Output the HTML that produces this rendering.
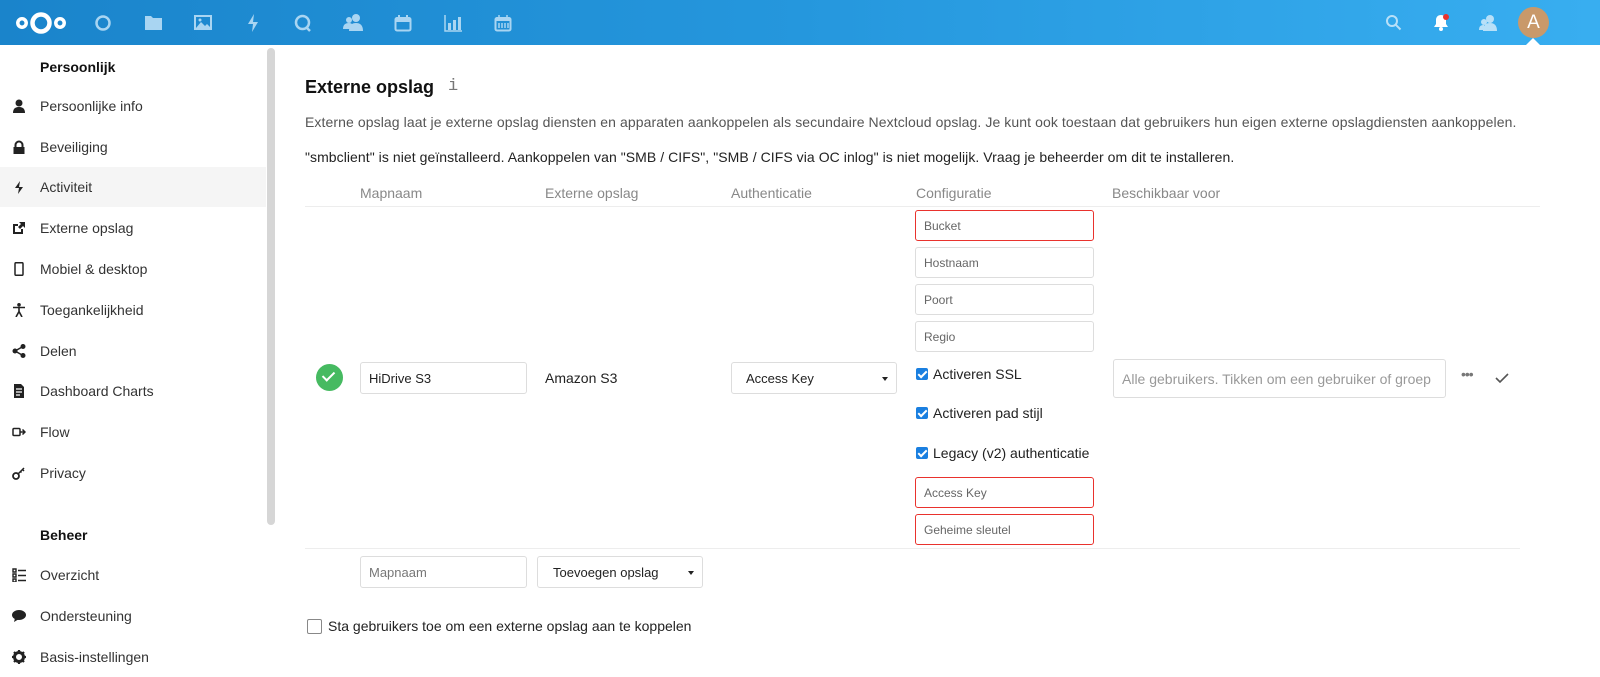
<!DOCTYPE html>
<html><head><meta charset="utf-8"><style>
*{box-sizing:border-box;margin:0;padding:0}
body{width:1600px;height:677px;overflow:hidden;background:#fff;font-family:"Liberation Sans",sans-serif;position:relative;color:#222}
.hdr{position:absolute;left:0;top:0;width:1600px;height:45px;background:linear-gradient(90deg,#1a84cb 0%,#2597dd 50%,#38aef0 100%)}
.a{position:absolute;white-space:nowrap}
.side{position:absolute;left:0;top:45px;width:276px;height:632px;background:#fff}
.item{position:absolute;left:0;width:266px;height:40px;font-size:14px;color:#333;line-height:40px;padding-left:40px}
.item svg{position:absolute;left:12px;top:13px}
.sec{position:absolute;left:40px;font-size:14px;font-weight:bold;color:#111}
.inp{position:absolute;border:1px solid #ddd;border-radius:3px;background:#fff;font-size:12px;color:#666;padding-left:8px;display:flex;align-items:center}
.red{border-color:#e9322d}
.th{position:absolute;top:185px;font-size:14px;color:#888}
.cb{position:absolute;width:12px;height:12px;background:#1a7fe0;border-radius:2px}
.cb:after{content:"";position:absolute;left:4px;top:1px;width:3px;height:7px;border:solid #fff;border-width:0 2px 2px 0;transform:rotate(45deg)}
.cl{position:absolute;font-size:14px;color:#222}
.caret{position:absolute;right:8px;top:14px;width:0;height:0;border-left:3.5px solid transparent;border-right:3.5px solid transparent;border-top:4px solid #222}
</style></head><body>
<div class="hdr">
<svg class="a" style="left:15px;top:10px" width="52" height="26" viewBox="0 0 52 26"><circle cx="26" cy="13" r="8.5" fill="none" stroke="#fff" stroke-width="4.5"/><circle cx="7" cy="13" r="4.2" fill="none" stroke="#fff" stroke-width="3.5"/><circle cx="45" cy="13" r="4.2" fill="none" stroke="#fff" stroke-width="3.5"/></svg>
<svg class="a" style="left:94px;top:14px" width="18" height="18"><circle cx="9" cy="9" r="6.5" fill="none" stroke="#a9d5f2" stroke-width="2.5"/></svg>
<svg class="a" style="left:145px;top:15px" width="17" height="15"><path d="M0 1h6l2 2h9v12H0z" fill="#a9d5f2"/></svg>
<svg class="a" style="left:194px;top:15px" width="18" height="15"><rect x="1" y="1" width="16" height="13" fill="none" stroke="#a9d5f2" stroke-width="2"/><path d="M2 13l5-6 4 4 2-2 4 4z" fill="#a9d5f2"/><circle cx="6" cy="5" r="1.5" fill="#a9d5f2"/></svg>
<svg class="a" style="left:247px;top:14px" width="12" height="18"><path d="M7 0L1 10h5l-1 8 6-10H6z" fill="#a9d5f2"/></svg>
<svg class="a" style="left:294px;top:14px" width="18" height="18"><circle cx="8.5" cy="8.5" r="6.5" fill="none" stroke="#a9d5f2" stroke-width="2.5"/><path d="M12 13l4 4" stroke="#a9d5f2" stroke-width="2.5"/></svg>
<svg class="a" style="left:342px;top:13px" width="22" height="19"><circle cx="14" cy="5" r="4" fill="#a9d5f2"/><path d="M7 18c0-6 3-8 7-8s7 2 7 8z" fill="#a9d5f2"/><circle cx="7" cy="7" r="3" fill="#a9d5f2"/><path d="M1 16c0-4 2-6 6-6 2 0 3 1 3 1v5z" fill="#a9d5f2"/></svg>
<svg class="a" style="left:394px;top:14px" width="18" height="18"><rect x="1.5" y="4" width="15" height="12.5" rx="1.5" fill="none" stroke="#a9d5f2" stroke-width="2"/><rect x="1.5" y="4" width="15" height="4" fill="#a9d5f2"/><path d="M5 1v4M13 1v4" stroke="#a9d5f2" stroke-width="2"/></svg>
<svg class="a" style="left:444px;top:14px" width="18" height="18"><path d="M1 1v16h17" stroke="#a9d5f2" stroke-width="1.5" fill="none"/><rect x="4" y="9" width="3" height="7" fill="#a9d5f2"/><rect x="9" y="6" width="3" height="10" fill="#a9d5f2"/><rect x="14" y="3" width="3" height="13" fill="#a9d5f2"/></svg>
<svg class="a" style="left:494px;top:14px" width="18" height="18"><rect x="1.5" y="4" width="15" height="12.5" rx="1.5" fill="none" stroke="#a9d5f2" stroke-width="2"/><rect x="1.5" y="4" width="15" height="3" fill="#a9d5f2"/><path d="M5 1v4M13 1v4M5 9v5M8 9v5M11 9v5M14 9v5" stroke="#a9d5f2" stroke-width="1.5"/></svg>
<svg class="a" style="left:1385px;top:14px" width="18" height="18"><circle cx="7" cy="7" r="5" fill="none" stroke="#b8e0f8" stroke-width="2"/><path d="M10.5 10.5l5 5" stroke="#b8e0f8" stroke-width="2"/></svg>
<svg class="a" style="left:1433px;top:13px" width="18" height="19"><path d="M8 2c-3 0-5 2-5 5v4l-2 3h14l-2-3V7c0-3-2-5-5-5z" fill="#fff"/><circle cx="8" cy="16" r="2" fill="#fff"/><circle cx="13" cy="4" r="3" fill="#e9322d"/></svg>
<svg class="a" style="left:1478px;top:14px" width="20" height="18"><circle cx="12" cy="5" r="4" fill="#b8e0f8"/><path d="M5 17c0-6 3-8 7-8s7 2 7 8z" fill="#b8e0f8"/><circle cx="6" cy="8" r="3" fill="#b8e0f8"/><path d="M1 16c0-4 2-5 5-5v5z" fill="#b8e0f8"/></svg>
<div class="a" style="left:1518px;top:7px;width:31px;height:31px;border-radius:50%;background:#c9996a;color:#fff;font-size:19px;text-align:center;line-height:31px">A</div>
<div class="a" style="left:1526px;top:38px;width:0;height:0;border-left:7px solid transparent;border-right:7px solid transparent;border-bottom:7px solid #fff"></div>
</div>

<div class="side">
<div class="sec" style="top:14px">Persoonlijk</div>
<div class="item" style="top:41px"><svg width="14" height="14"><circle cx="7" cy="4" r="3.5" fill="#222"/><path d="M1 14c0-5 3-6 6-6s6 1 6 6z" fill="#222"/></svg>Persoonlijke info</div>
<div class="item" style="top:82px"><svg width="14" height="14"><path d="M3.5 7V5a3.5 3.5 0 0 1 7 0v2" stroke="#222" stroke-width="2" fill="none"/><rect x="1.5" y="7" width="11" height="7" fill="#222"/></svg>Beveiliging</div>
<div class="item" style="top:122px;background:#f5f5f5"><svg width="14" height="14"><path d="M8 1L3 8h4l-1 6 5-7H7z" fill="#222"/></svg>Activiteit</div>
<div class="item" style="top:163px"><svg width="14" height="14"><path d="M1 3h5v2H3v6h6V8h2v5H1z" fill="#222"/><path d="M7 1h6v6l-2-2-3 3-2-2 3-3z" fill="#222"/></svg>Externe opslag</div>
<div class="item" style="top:204px"><svg width="14" height="14"><rect x="3" y="0.7" width="8" height="12.6" rx="1" fill="none" stroke="#222" stroke-width="1.5"/></svg>Mobiel &amp; desktop</div>
<div class="item" style="top:245px"><svg width="14" height="14"><circle cx="7" cy="1.8" r="1.8" fill="#222"/><path d="M1 4.5h12M7 4.5v4M7 8.5l-3 5.5M7 8.5l3 5.5" stroke="#222" stroke-width="1.6"/></svg>Toegankelijkheid</div>
<div class="item" style="top:286px"><svg width="14" height="14"><circle cx="3" cy="7" r="2.5" fill="#222"/><circle cx="11" cy="2.5" r="2.5" fill="#222"/><circle cx="11" cy="11.5" r="2.5" fill="#222"/><path d="M3 7l8-4.5M3 7l8 4.5" stroke="#222" stroke-width="1.5"/></svg>Delen</div>
<div class="item" style="top:326px"><svg width="14" height="14"><path d="M2 0h7l3 3v11H2z" fill="#222"/><path d="M4 5h6M4 8h6M4 11h4" stroke="#fff" stroke-width="1.2"/></svg>Dashboard Charts</div>
<div class="item" style="top:367px"><svg width="14" height="14"><rect x="1" y="3.5" width="7" height="7" rx="1" fill="none" stroke="#222" stroke-width="1.5"/><path d="M8 7h5M10.5 4.5L13 7l-2.5 2.5" stroke="#222" stroke-width="1.5" fill="none"/></svg>Flow</div>
<div class="item" style="top:408px"><svg width="14" height="14"><circle cx="4" cy="10" r="3" fill="none" stroke="#222" stroke-width="1.8"/><path d="M6 8l6-6M10 3l2 2M8 5l1.5 1.5" stroke="#222" stroke-width="1.5"/></svg>Privacy</div>
<div class="sec" style="top:482px">Beheer</div>
<div class="item" style="top:510px"><svg width="14" height="14"><path d="M1 1h3v3H1zM1 6h3v3H1zM1 11h3v3H1zM6 2.5h8M6 7.5h8M6 12.5h8" stroke="#222" stroke-width="1.4" fill="none"/></svg>Overzicht</div>
<div class="item" style="top:551px"><svg width="14" height="14"><ellipse cx="7" cy="6" rx="7" ry="5" fill="#222"/><path d="M3 9l-1 4 5-3z" fill="#222"/></svg>Ondersteuning</div>
<div class="item" style="top:592px"><svg width="14" height="14"><circle cx="7" cy="7" r="4.5" fill="none" stroke="#222" stroke-width="3"/><path d="M7 0v3M7 11v3M0 7h3M11 7h3M2 2l2 2M10 10l2 2M12 2l-2 2M2 12l2-2" stroke="#222" stroke-width="2.2"/></svg>Basis-instellingen</div>
<div class="a" style="left:267px;top:3px;width:8px;height:477px;background:#d6d6d6;border-radius:4px"></div>
</div>

<div class="a" style="left:305px;top:77px;font-size:18px;font-weight:bold;color:#111">Externe opslag</div>
<div class="a" style="left:448px;top:77px;font-size:17px;color:#777;font-family:'Liberation Mono',monospace">i</div>
<div class="a" style="left:305px;top:114px;font-size:14px;color:#555;letter-spacing:0.09px">Externe opslag laat je externe opslag diensten en apparaten aankoppelen als secundaire Nextcloud opslag. Je kunt ook toestaan dat gebruikers hun eigen externe opslagdiensten aankoppelen.</div>
<div class="a" style="left:305px;top:149px;font-size:14px;color:#222;letter-spacing:0.06px">"smbclient" is niet geïnstalleerd. Aankoppelen van "SMB / CIFS", "SMB / CIFS via OC inlog" is niet mogelijk. Vraag je beheerder om dit te installeren.</div>

<div class="th a" style="left:360px">Mapnaam</div>
<div class="th a" style="left:545px">Externe opslag</div>
<div class="th a" style="left:731px">Authenticatie</div>
<div class="th a" style="left:916px">Configuratie</div>
<div class="th a" style="left:1112px">Beschikbaar voor</div>
<div class="a" style="left:305px;top:206px;width:1235px;height:1px;background:#ededed"></div>
<div class="a" style="left:305px;top:548px;width:1215px;height:1px;background:#ededed"></div>

<div class="a" style="left:316px;top:364px;width:27px;height:27px;border-radius:50%;background:#46ba61"></div>
<div class="a" style="left:325px;top:369px;width:7px;height:12px;border:solid #fff;border-width:0 2px 2px 0;transform:rotate(45deg)"></div>
<div class="inp" style="left:360px;top:362px;width:167px;height:32px;color:#222;font-size:13px">HiDrive S3</div>
<div class="a" style="left:545px;top:370px;font-size:14px;color:#222">Amazon S3</div>
<div class="inp" style="left:731px;top:362px;width:166px;height:32px;color:#222;font-size:13px;padding-left:14px">Access Key<span class="caret"></span></div>

<div class="inp red" style="left:915px;top:210px;width:179px;height:31px">Bucket</div>
<div class="inp" style="left:915px;top:247px;width:179px;height:31px">Hostnaam</div>
<div class="inp" style="left:915px;top:284px;width:179px;height:31px">Poort</div>
<div class="inp" style="left:915px;top:321px;width:179px;height:31px">Regio</div>
<div class="cb" style="left:916px;top:368px"></div><div class="cl" style="left:933px;top:366px">Activeren SSL</div>
<div class="cb" style="left:916px;top:407px"></div><div class="cl" style="left:933px;top:405px">Activeren pad stijl</div>
<div class="cb" style="left:916px;top:447px"></div><div class="cl" style="left:933px;top:445px">Legacy (v2) authenticatie</div>
<div class="inp red" style="left:915px;top:477px;width:179px;height:31px">Access Key</div>
<div class="inp red" style="left:915px;top:514px;width:179px;height:31px">Geheime sleutel</div>

<div class="inp" style="left:1113px;top:359px;width:333px;height:39px;font-size:14px;color:#999;overflow:hidden;white-space:nowrap">Alle gebruikers. Tikken om een gebruiker of groep</div>
<div class="a" style="left:1461px;top:366px;font-size:14px;color:#777;letter-spacing:-1px">•••</div>
<svg class="a" style="left:1495px;top:372px" width="14" height="12"><path d="M1 6l4 4 8-8" stroke="#555" stroke-width="1.6" fill="none"/></svg>

<div class="inp" style="left:360px;top:556px;width:167px;height:32px;font-size:13px;color:#777">Mapnaam</div>
<div class="inp" style="left:537px;top:556px;width:166px;height:32px;font-size:13px;color:#222;padding-left:15px">Toevoegen opslag<span class="caret"></span></div>

<div class="a" style="left:307px;top:619px;width:15px;height:15px;border:1px solid #888;border-radius:2px"></div>
<div class="a" style="left:328px;top:618px;font-size:14px;color:#222">Sta gebruikers toe om een externe opslag aan te koppelen</div>
</body></html>
